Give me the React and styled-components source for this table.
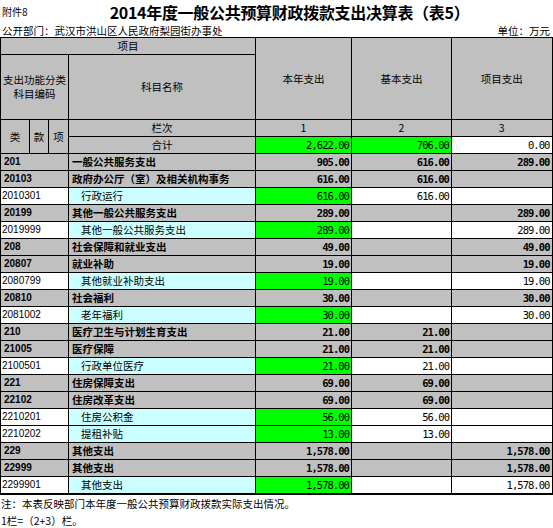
import React from "react"
import styled, { createGlobalStyle, css } from "styled-components"

const GlobalStyle = createGlobalStyle`
  html, body {
    margin: 0;
    padding: 0;
    background: #fff;
  }
  body {
    font-family: "Noto Sans CJK SC", "Liberation Sans", sans-serif;
    color: #000;
  }
`

const colors = {
  gray: "#c0c0c0",
  green: "#00ff00",
  cyan: "#ccffff",
  white: "#ffffff",
}

const Page = styled.div`
  width: 553px;
`

const TitleRow = styled.div`
  display: flex;
  align-items: center;
  height: 24px;
`

const Attach = styled.span`
  width: 24px;
  padding-left: 2px;
  font-size: 10px;
  line-height: 24px;
  white-space: nowrap;
`

const Title = styled.h1`
  flex: 1;
  margin: 0;
  text-align: center;
  font-size: 16px;
  font-weight: 700;
  line-height: 24px;
  letter-spacing: -0.3px;
`

const SubRow = styled.div`
  display: flex;
  justify-content: space-between;
  height: 13px;
  padding: 0 3px 0 2px;
  font-size: 10.5px;
  line-height: 13px;
`

const Table = styled.table`
  width: 552px;
  table-layout: fixed;
  border-collapse: collapse;
  font-size: 10.5px;
  border-right: 2px solid #000;
  border-bottom: 2px solid #000;
`

const Row = styled.tr`
  height: ${({ h }) => h || 17}px;
`

const Cell = styled.td`
  border: 1px solid #000;
  padding: 0 2px;
  line-height: 14px;
  white-space: nowrap;
  overflow: hidden;
  background: ${({ bg }) => colors[bg] || colors.gray};
  text-align: ${({ align }) => align || "left"};
  font-weight: ${({ bold }) => (bold ? 700 : 400)};
`

const HeadCell = styled(Cell)`
  text-align: center;
  white-space: normal;
  line-height: 14px;
`

const CodeCell = styled(Cell)`
  font-family: "Liberation Sans", "Noto Sans CJK SC", sans-serif;
  font-size: 10px;
  padding-left: ${({ bold }) => (bold ? 3 : 1)}px;
`

const NameCell = styled(Cell)`
  padding-left: ${({ leaf }) => (leaf ? 12 : 3)}px;
`

const NumCell = styled(Cell)`
  text-align: right;
  font-family: "DejaVu Sans Mono", "Liberation Mono", monospace;
  font-size: 10.5px;
  letter-spacing: -0.95px;
  padding-right: 2px;
  ${({ bold }) =>
    bold &&
    css`
      font-weight: 700;
    `}
`

const Notes = styled.div`
  padding-left: 1px;
  font-size: 10.5px;
  line-height: 17px;
`

const rows = [
  ["201", "一般公共服务支出", "905.00", "616.00", "289.00", true],
  ["20103", "政府办公厅（室）及相关机构事务", "616.00", "616.00", "", true],
  ["2010301", "行政运行", "616.00", "616.00", "", false],
  ["20199", "其他一般公共服务支出", "289.00", "", "289.00", true],
  ["2019999", "其他一般公共服务支出", "289.00", "", "289.00", false],
  ["208", "社会保障和就业支出", "49.00", "", "49.00", true],
  ["20807", "就业补助", "19.00", "", "19.00", true],
  ["2080799", "其他就业补助支出", "19.00", "", "19.00", false],
  ["20810", "社会福利", "30.00", "", "30.00", true],
  ["2081002", "老年福利", "30.00", "", "30.00", false],
  ["210", "医疗卫生与计划生育支出", "21.00", "21.00", "", true],
  ["21005", "医疗保障", "21.00", "21.00", "", true],
  ["2100501", "行政单位医疗", "21.00", "21.00", "", false],
  ["221", "住房保障支出", "69.00", "69.00", "", true],
  ["22102", "住房改革支出", "69.00", "69.00", "", true],
  ["2210201", "住房公积金", "56.00", "56.00", "", false],
  ["2210202", "提租补贴", "13.00", "13.00", "", false],
  ["229", "其他支出", "1,578.00", "", "1,578.00", true],
  ["22999", "其他支出", "1,578.00", "", "1,578.00", true],
  ["2299901", "其他支出", "1,578.00", "", "1,578.00", false],
]

export default function App() {
  return (
    <Page>
      <GlobalStyle />
      <TitleRow>
        <Attach>附件8</Attach>
        <Title>2014年度一般公共预算财政拨款支出决算表（表5）</Title>
      </TitleRow>
      <SubRow>
        <span>公开部门：武汉市洪山区人民政府梨园街办事处</span>
        <span>单位：万元</span>
      </SubRow>
      <Table>
        <colgroup>
          <col style={{ width: 29 }} />
          <col style={{ width: 19 }} />
          <col style={{ width: 20 }} />
          <col style={{ width: 187 }} />
          <col style={{ width: 96 }} />
          <col style={{ width: 100 }} />
          <col style={{ width: 101 }} />
        </colgroup>
        <tbody>
          <Row h={17}>
            <HeadCell colSpan={4}>项目</HeadCell>
            <HeadCell rowSpan={2}>本年支出</HeadCell>
            <HeadCell rowSpan={2}>基本支出</HeadCell>
            <HeadCell rowSpan={2}>项目支出</HeadCell>
          </Row>
          <Row h={65}>
            <HeadCell colSpan={3}>
              <div>支出功能分类</div>
              <div>科目编码</div>
            </HeadCell>
            <HeadCell>科目名称</HeadCell>
          </Row>
          <Row h={17}>
            <HeadCell rowSpan={2}>类</HeadCell>
            <HeadCell rowSpan={2}>款</HeadCell>
            <HeadCell rowSpan={2}>项</HeadCell>
            <HeadCell>栏次</HeadCell>
            <HeadCell>1</HeadCell>
            <HeadCell>2</HeadCell>
            <HeadCell>3</HeadCell>
          </Row>
          <Row h={17}>
            <HeadCell>合计</HeadCell>
            <NumCell bg="green">2,622.00</NumCell>
            <NumCell bg="green">706.00</NumCell>
            <NumCell bg="white">0.00</NumCell>
          </Row>
          {rows.map(([code, name, a, b, c, bold]) => (
            <Row key={code} h={17}>
              <CodeCell colSpan={3} bold={bold} bg={bold ? "gray" : "white"}>
                {code}
              </CodeCell>
              <NameCell bold={bold} leaf={!bold} bg={bold ? "gray" : "cyan"}>
                {name}
              </NameCell>
              <NumCell bold={bold} bg={bold ? "gray" : "green"}>
                {a}
              </NumCell>
              <NumCell bold={bold} bg={bold ? "gray" : "white"}>
                {b}
              </NumCell>
              <NumCell bold={bold} bg={bold ? "gray" : "white"}>
                {c}
              </NumCell>
            </Row>
          ))}
        </tbody>
      </Table>
      <Notes>
        <div>注：本表反映部门本年度一般公共预算财政拨款实际支出情况。</div>
        <div>1栏=（2+3）栏。</div>
      </Notes>
    </Page>
  )
}
